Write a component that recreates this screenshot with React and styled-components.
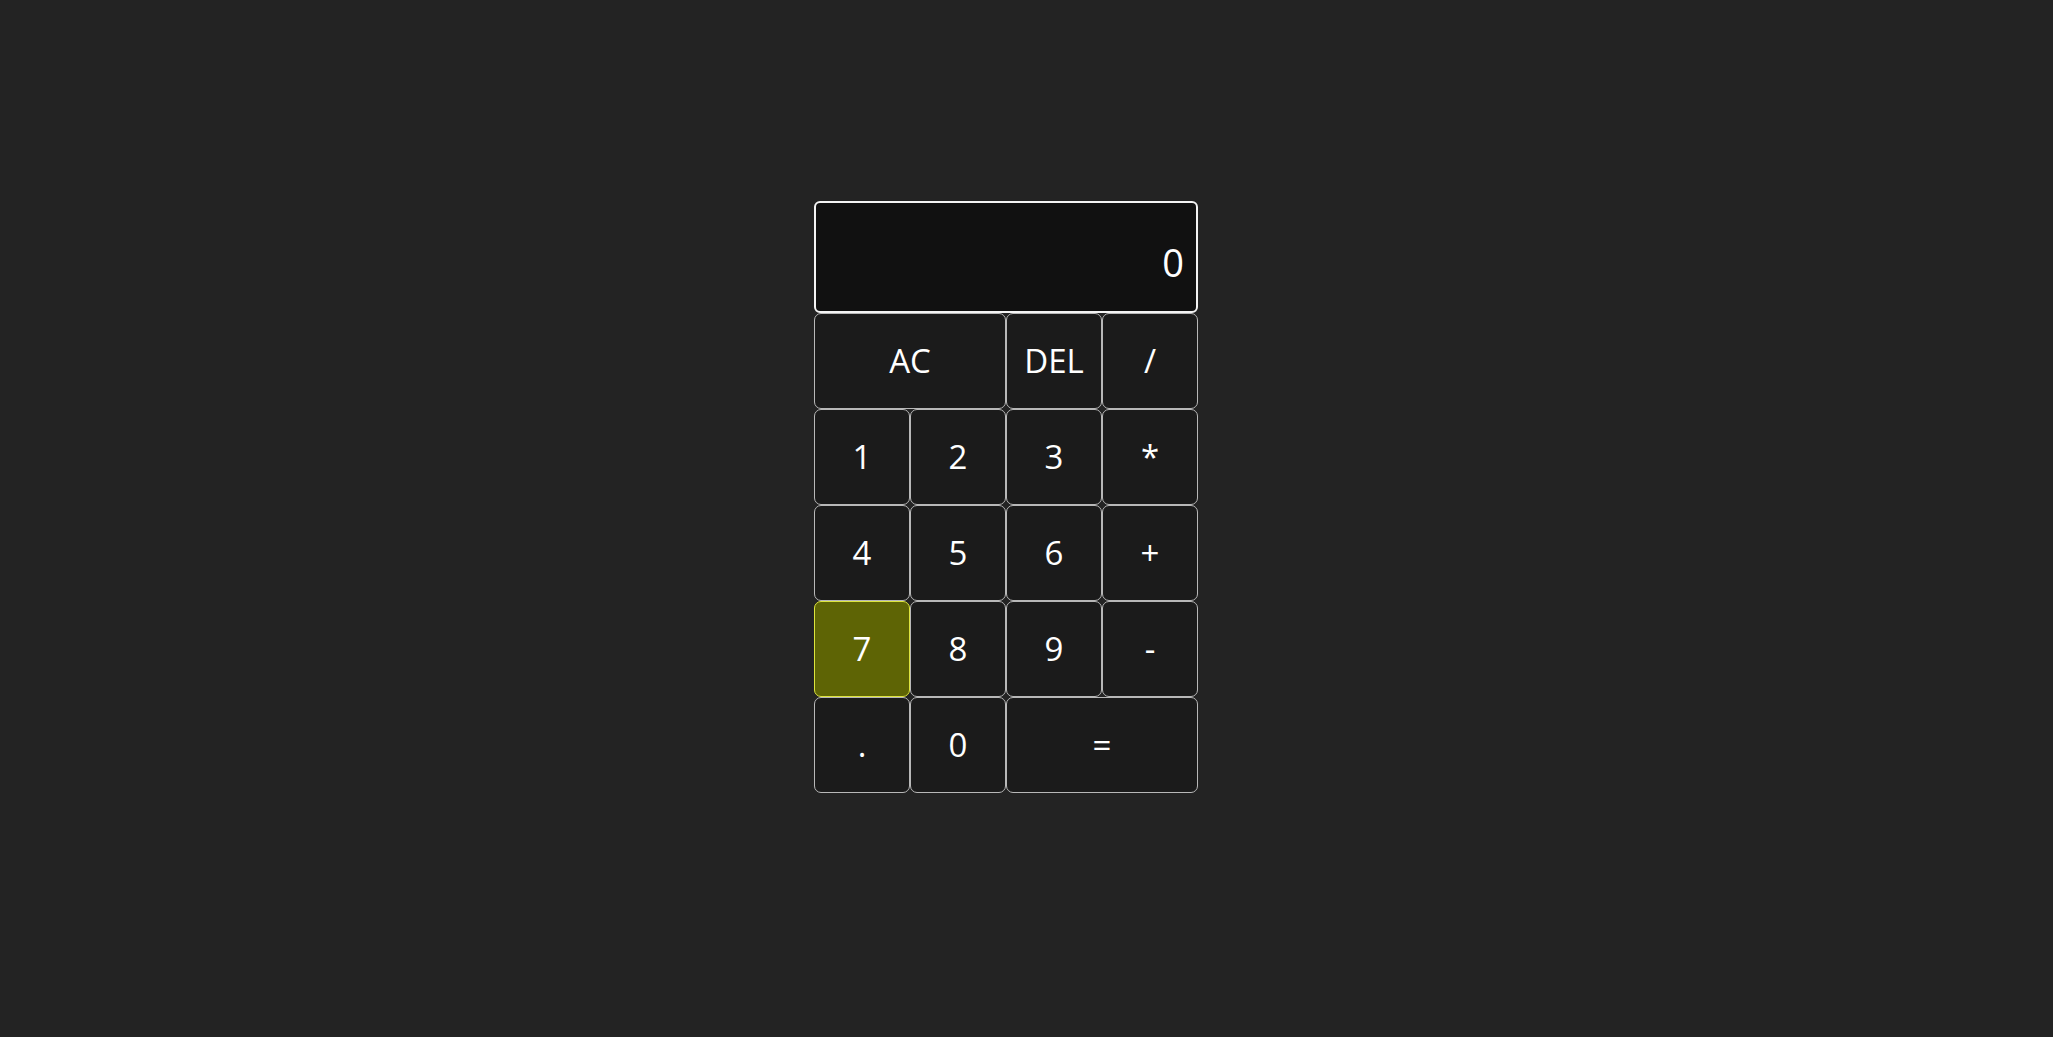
import React from "react";
import styled, { createGlobalStyle } from "styled-components";

const GlobalStyle = createGlobalStyle`
  html, body {
    margin: 0;
    padding: 0;
    background: #232323;
    font-family: "Open Sans", "Noto Sans", sans-serif;
  }
`;

const Page = styled.div`
  min-height: 100vh;
  box-sizing: border-box;
  display: flex;
  justify-content: center;
  align-items: flex-start;
  padding: 201px 41px 0 0;
`;

const Calculator = styled.div`
  display: grid;
  grid-template-columns: repeat(4, 96px);
  grid-template-rows: 112px repeat(5, 96px);
`;

const Display = styled.div`
  grid-column: 1 / -1;
  box-sizing: border-box;
  background: #111111;
  border: 2px solid #f4f4f4;
  border-radius: 6px;
  color: #ffffff;
  font-size: 38px;
  display: flex;
  align-items: center;
  justify-content: flex-end;
  padding: 10px 12px 0 10px;
`;

const Key = styled.button`
  grid-column: span ${(p) => p.$span || 1};
  box-sizing: border-box;
  margin: 0;
  background: ${(p) => (p.$active ? "#5e6405" : "#1b1b1b")};
  border: 1px solid ${(p) => (p.$active ? "#dde43e" : "#b8b8b8")};
  border-radius: 7px;
  color: #ffffff;
  font-family: "Open Sans", "Noto Sans", sans-serif;
  font-size: 33px;
  padding: 0 0 2px 0;
  cursor: pointer;
  display: flex;
  align-items: center;
  justify-content: center;
`;

const keys = [
  { label: "AC", span: 2 },
  { label: "DEL" },
  { label: "/" },
  { label: "1" },
  { label: "2" },
  { label: "3" },
  { label: "*" },
  { label: "4" },
  { label: "5" },
  { label: "6" },
  { label: "+" },
  { label: "7", active: true },
  { label: "8" },
  { label: "9" },
  { label: "-" },
  { label: "." },
  { label: "0" },
  { label: "=", span: 2 },
];

export default function App() {
  return (
    <>
      <GlobalStyle />
      <Page>
        <Calculator>
          <Display>0</Display>
          {keys.map((k) => (
            <Key key={k.label} $span={k.span} $active={k.active}>
              {k.label}
            </Key>
          ))}
        </Calculator>
      </Page>
    </>
  );
}
